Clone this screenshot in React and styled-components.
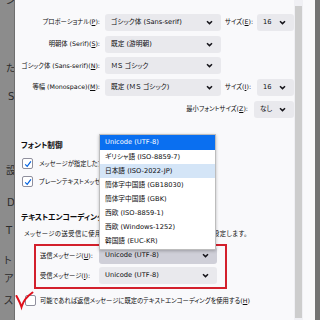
import React from 'react';
import styled, { createGlobalStyle } from 'styled-components';

const GlobalStyle = createGlobalStyle`
  html, body {
    margin: 0;
    padding: 0;
    background: #f9f9fb;
  }
  body {
    font-family: "DejaVu Sans", "Noto Sans CJK JP", sans-serif;
    font-feature-settings: "palt";
    color: #0c0c0d;
  }
`;

const Window = styled.div`
  width: 320px;
  height: 320px;
  display: flex;
  overflow: hidden;
  font-size: 6.3px;
  line-height: 1;
`;

const BehindStrip = styled.div`
  width: 14px;
  flex: none;
  background: #8c8c8c;
  border-right: 1px solid #6f6f6f;
  overflow: hidden;
  position: relative;
  color: #2b2b2b;
  font-size: 10px;
`;

const BehindChar = styled.span`
  position: absolute;
  left: ${p => p.$x}px;
  top: ${p => p.$y}px;
`;

const Pane = styled.div`
  flex: 1;
  position: relative;
  padding-top: 14px;
`;

const FontRow = styled.div`
  display: grid;
  grid-template-columns: 86px 116px 28px 37px;
  column-gap: 4px;
  align-items: center;
  height: 17px;
  margin-bottom: 4.7px;
`;

const Label = styled.label`
  text-align: ${p => (p.$right ? 'right' : 'left')};
  white-space: nowrap;
  padding-right: ${p => (p.$right ? '1px' : '0')};
`;

const SelectBox = styled.div`
  height: 17px;
  border-radius: 3px;
  background: ${p => (p.$active ? '#cfcfd8' : '#e9e9ed')};
  display: flex;
  align-items: center;
  justify-content: space-between;
  padding: 0 8px 0 6px;
  box-sizing: border-box;
  white-space: nowrap;
  overflow: hidden;
  font-size: 6.7px;
  width: ${p => p.$w || 'auto'};
`;

const Chevron = () => (
  <svg width="7" height="5" viewBox="0 0 7 5">
    <path d="M1 1.2 L3.5 3.6 L6 1.2" fill="none" stroke="#15141a" strokeWidth="1.5" />
  </svg>
);

const MinRow = styled.div`
  display: flex;
  justify-content: flex-end;
  align-items: center;
  gap: 6px;
  margin-top: 2.5px;
`;

const Heading = styled.div`
  font-weight: 700;
  font-size: 7.6px;
  padding-left: 6px;
  margin-top: ${p => p.$mt}px;
`;

const CheckRow = styled.div`
  display: flex;
  align-items: center;
  gap: ${p => p.$gap || 6}px;
  padding-left: ${p => p.$pl || 7}px;
  margin-top: ${p => p.$mt}px;
  white-space: nowrap;
  position: relative;
`;

const Box = styled.span`
  width: 9px;
  height: 9px;
  flex: none;
  border: 1px solid #8f8f9d;
  border-radius: 2px;
  background: #fff;
  display: flex;
  align-items: center;
  justify-content: center;
`;

const Tick = () => (
  <svg width="8" height="8" viewBox="0 0 8 8">
    <path d="M1.2 4.3 L3.2 6.3 L6.9 1.4" fill="none" stroke="#0061e0" strokeWidth="1.2" />
  </svg>
);

const Description = styled.div`
  padding-left: 9px;
  margin-top: 9px;
  white-space: nowrap;
  letter-spacing: 0.45px;
`;

const RedFrame = styled.div`
  margin: 7px 0 0 19px;
  width: 193px;
  height: 45px;
  box-sizing: border-box;
  border: 2px solid #d3202c;
  padding: 1px 8px 0 4px;
  display: flex;
  flex-direction: column;
  gap: 3px;
`;

const EncRow = styled.div`
  display: grid;
  grid-template-columns: 59px 118px;
  align-items: center;
`;

const RedCheck = styled.svg`
  position: absolute;
  left: 0;
  top: -4px;
`;

const Popup = styled.div`
  position: absolute;
  left: 84px;
  top: 134px;
  width: 117px;
  height: 116px;
  background: #fff;
  border: 1px solid #bdbdbd;
  box-shadow: 0 1px 3px rgba(0, 0, 0, 0.25);
  box-sizing: border-box;
  font-size: 6.7px;
`;

const Option = styled.div`
  height: ${p => (p.$first ? 15 : 14)}px;
  display: flex;
  align-items: center;
  padding-left: 5px;
  white-space: nowrap;
  background: ${p => (p.$selected ? '#0a6ff0' : p.$hover ? '#d4e5f7' : 'transparent')};
  color: ${p => (p.$selected ? '#fff' : '#0c0c0d')};
`;

const Scrollbar = styled.div`
  width: 9px;
  flex: none;
  background: #f0f0f4;
  padding: 6px 1px 2px;
  box-sizing: border-box;
`;

const Thumb = styled.div`
  height: 100%;
  background: #cdcdcd;
`;

const Gutter = styled.div`
  width: 12px;
  flex: none;
  background: #f9f9fb;
`;

const OuterEdge = styled.div`
  width: 5px;
  flex: none;
  background: #737373;
`;

const encodings = [
  'Unicode (UTF-8)',
  'ギリシャ語 (ISO-8859-7)',
  '日本語 (ISO-2022-JP)',
  '簡体字中国語 (GB18030)',
  '簡体字中国語 (GBK)',
  '西欧 (ISO-8859-1)',
  '西欧 (Windows-1252)',
  '韓国語 (EUC-KR)',
];

const Select = ({ children, w, active }) => (
  <SelectBox $w={w} $active={active}>
    <span>{children}</span>
    <Chevron />
  </SelectBox>
);

export default function App() {
  return (
    <>
      <GlobalStyle />
      <Window>
        <BehindStrip>
          <BehindChar $x={6} $y={-4}>ン</BehindChar>
          <BehindChar $x={6} $y={64}>た</BehindChar>
          <BehindChar $x={8} $y={92}>S</BehindChar>
          <BehindChar $x={6} $y={166}>設</BehindChar>
          <BehindChar $x={7} $y={198}>D</BehindChar>
          <BehindChar $x={6} $y={226}>T</BehindChar>
          <BehindChar $x={4} $y={256}>ト</BehindChar>
          <BehindChar $x={4} $y={274}>ア</BehindChar>
          <BehindChar $x={4} $y={296}>ス</BehindChar>
        </BehindStrip>

        <Pane>
          <FontRow>
            <Label $right>プロポーショナル(<u>P</u>):</Label>
            <Select>ゴシック体 (Sans-serif)</Select>
            <Label>サイズ(<u>E</u>):</Label>
            <Select>16</Select>
          </FontRow>
          <FontRow>
            <Label $right>明朝体 (Serif)(<u>S</u>):</Label>
            <Select>既定 (游明朝)</Select>
          </FontRow>
          <FontRow>
            <Label $right>ゴシック体 (Sans-serif)(<u>N</u>):</Label>
            <Select>ＭＳ ゴシック</Select>
          </FontRow>
          <FontRow>
            <Label $right>等幅 (Monospace)(<u>M</u>):</Label>
            <Select>既定 (ＭＳ ゴシック)</Select>
            <Label>サイズ(<u>I</u>):</Label>
            <Select>16</Select>
          </FontRow>
          <MinRow>
            <Label>最小フォントサイズ(<u>Z</u>):</Label>
            <Select w="40px">なし</Select>
          </MinRow>

          <Heading $mt={24}>フォント制御</Heading>
          <CheckRow $mt={9}>
            <Box><Tick /></Box>
            <span>メッセージが指定したフォントではなく、上記の設定を使用する</span>
          </CheckRow>
          <CheckRow $mt={7}>
            <Box><Tick /></Box>
            <span>プレーンテキストメッセージでは固定幅フォントを使用する</span>
          </CheckRow>

          <Heading $mt={27}>テキストエンコーディング</Heading>
          <Description>メッセージの送受信に使用する既定のテキストエンコーディングを設定します。</Description>

          <RedFrame>
            <EncRow>
              <Label>送信メッセージ(<u>U</u>):</Label>
              <Select active>Unicode (UTF-8)</Select>
            </EncRow>
            <EncRow>
              <Label>受信メッセージ(<u>I</u>):</Label>
              <Select>Unicode (UTF-8)</Select>
            </EncRow>
          </RedFrame>

          <CheckRow $mt={6} $pl={10} $gap={4}>
            <Box />
            <span>可能であれば返信メッセージに既定のテキストエンコーディングを使用する(<u>H</u>)</span>
            <RedCheck width="20" height="20" viewBox="0 0 20 20">
              <path d="M1.5 5 C3 8 5 11 6.5 16 C8 11 11 6 17.5 1.5" fill="none" stroke="#e0101c" strokeWidth="2" strokeLinecap="round" />
            </RedCheck>
          </CheckRow>

          <Popup>
            {encodings.map((e, i) => (
              <Option key={e} $first={i === 0} $selected={i === 0} $hover={i === 2}>
                {e}
              </Option>
            ))}
          </Popup>
        </Pane>

        <Scrollbar>
          <Thumb />
        </Scrollbar>
        <Gutter />
        <OuterEdge />
      </Window>
    </>
  );
}
